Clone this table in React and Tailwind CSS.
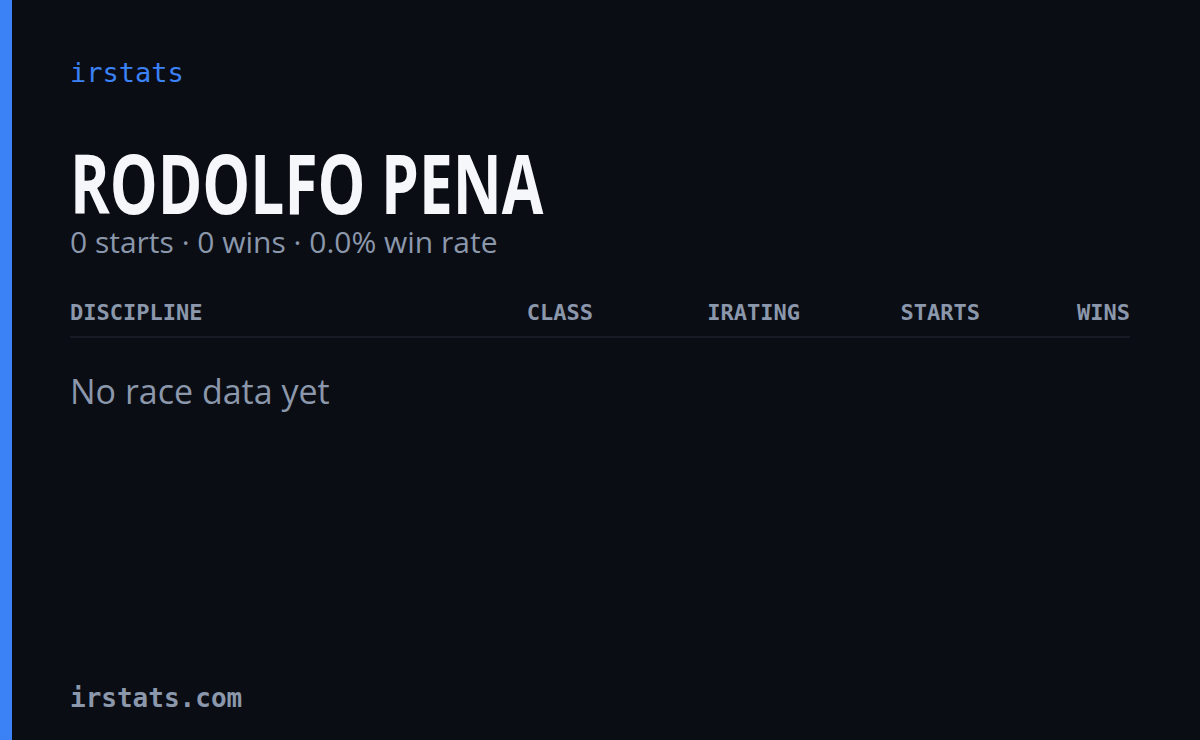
export default function App() {
  const mono = { fontFamily: '"DejaVu Sans Mono", "Liberation Mono", monospace' };
  const sans = { fontFamily: '"Open Sans", sans-serif' };
  return (
    <div className="flex h-[740px] w-[1200px] overflow-hidden bg-[#0a0d14]">
      <div className="w-[12px] shrink-0 bg-[#3b82f6]" />
      <div className="flex flex-1 flex-col pl-[58px] pr-[70px] pt-[56px] pb-[26px]">
        <div className="text-[27px] leading-[34px] text-[#3b82f6]" style={mono}>irstats</div>
        {/* no condensed face installed, so squeeze the bold sans horizontally */}
        <h1
          className="mt-[52px] origin-left scale-x-[0.735] whitespace-nowrap text-[82px] font-bold leading-[80px] text-[#f5f7fb]"
          style={sans}
        >
          RODOLFO PENA
        </h1>
        <div className="mt-[1px] text-[30px] leading-[38px] text-[#8b97ab]" style={sans}>
          0 starts · 0 wins · 0.0% win rate
        </div>
        <div className="mt-[39px] flex border-b-2 border-[#171b25] pb-[10px] text-[22px] font-bold leading-[26px] text-[#8b97ab]" style={mono}>
          <div className="flex-1">DISCIPLINE</div>
          <div className="w-[140px] text-right">CLASS</div>
          <div className="w-[207px] text-right">IRATING</div>
          <div className="w-[180px] text-right">STARTS</div>
          <div className="w-[150px] text-right">WINS</div>
        </div>
        <div className="mt-[32px] text-[34px] leading-[42px] text-[#8b97ab]" style={sans}>
          No race data yet
        </div>
        <div className="mt-auto text-[26px] font-bold leading-[32px] text-[#8b97ab]" style={mono}>irstats.com</div>
      </div>
    </div>
  );
}
